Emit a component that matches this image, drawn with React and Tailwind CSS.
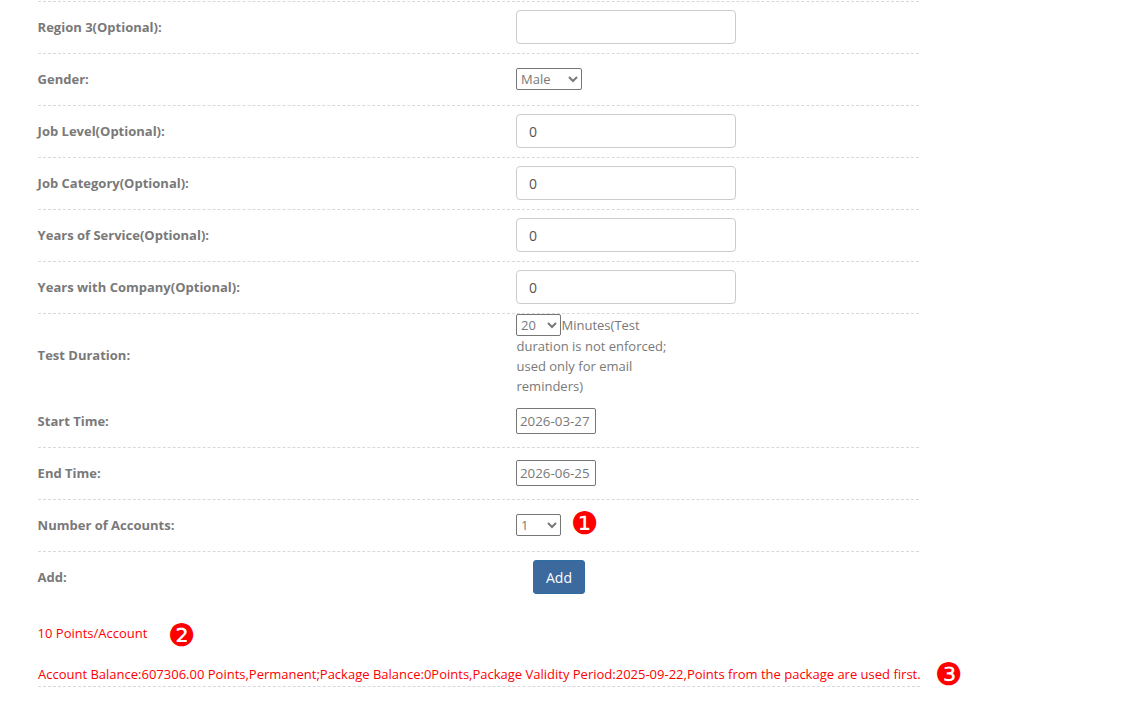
const font = "font-['Open_Sans',sans-serif]";

function Row({ label, children, noBorder, className = "h-[52px]", labelClass = "" }) {
  return (
    <div className={`flex items-center ${className} ${noBorder ? "" : "border-b border-dashed border-[#d9d9d9]"}`}>
      <div className={`w-[478px] shrink-0 -translate-x-[0.4px] text-[13px] font-bold text-[#797979] ${labelClass}`}>{label}</div>
      <div className="flex items-center pb-px">{children}</div>
    </div>
  );
}

function TextInput({ value }) {
  return (
    <input
      readOnly
      defaultValue={value}
      className="w-[220px] h-[34px] rounded border border-[#cccccc] bg-white px-3 text-[14px] text-[#555555] outline-none"
    />
  );
}

function Select({ options, className }) {
  return (
    <select className={`h-[22px] rounded-[2px] border border-[#767676] bg-white text-[13px] text-[#797979] ${className}`}>
      {options.map((o) => (
        <option key={o}>{o}</option>
      ))}
    </select>
  );
}

function DateBox({ value }) {
  return (
    <input
      readOnly
      defaultValue={value}
      className="w-[80px] h-[26px] rounded-[2px] border border-[#767676] bg-white px-[3px] text-[13.33px] text-[#797979] outline-none"
    />
  );
}

function Mark({ children, className = "" }) {
  return (
    <span className={`font-['DejaVu_Sans',sans-serif] text-[31px] leading-none text-[#ff0000] ${className}`}>
      {children}
    </span>
  );
}

export default function App() {
  return (
    <div className={`${font} h-[703px] w-[1126px] overflow-hidden bg-white pl-[38px] pt-px`}>
      <div className="w-[881px]">
        <div className="border-b border-dashed border-[#d9d9d9]" />
        <Row label="Region 3(Optional):"><TextInput value="" /></Row>
        <Row label="Gender:"><Select options={["Male", "Female"]} className="w-[66px]" /></Row>
        <Row label="Job Level(Optional):"><TextInput value="0" /></Row>
        <Row label="Job Category(Optional):"><TextInput value="0" /></Row>
        <Row label="Years of Service(Optional):"><TextInput value="0" /></Row>
        <Row label="Years with Company(Optional):"><TextInput value="0" /></Row>
        <Row label="Test Duration:" noBorder className="h-[82px]" labelClass="pt-[2px]">
          <div className="w-[165px] pl-[0.5px] pt-[1px] text-[13px] leading-[20.25px] text-[#797979]">
            <Select options={["20", "30", "60"]} className="-ml-[0.5px] mr-[0.5px] w-[45px]" />
            Minutes(Test duration is not enforced; used only for email reminders)
          </div>
        </Row>
        <Row label="Start Time:"><DateBox value="2026-03-27" /></Row>
        <Row label="End Time:"><DateBox value="2026-06-25" /></Row>
        <Row label="Number of Accounts:">
          <Select options={["1", "2", "3"]} className="w-[45px]" />
          <Mark className="ml-[10px] -mt-[4px]">❶</Mark>
        </Row>
        <Row label="Add:" noBorder>
          <button className="mb-px ml-[17px] h-[34px] w-[52px] rounded-[3px] border border-[#2e6da4] bg-[#3c699e] text-[14px] text-white">
            Add
          </button>
        </Row>
      </div>
      <div className="mt-[13px] flex h-[34px] items-center text-[13px] text-[#ff0000]">
        <span className="-translate-x-[0.4px]">10 Points/Account</span>
        <Mark className="ml-[20px] mt-[2px]">❷</Mark>
      </div>
      <div className="mt-[2px] flex h-[34px] items-center text-[13px] text-[#ff0000]">
        <span className="flex h-[34px] w-[882px] items-end whitespace-nowrap border-b border-dashed border-[#d9d9d9] pb-[2px]">
          Account Balance:607306.00 Points,Permanent;Package Balance:0Points,Package Validity Period:2025-09-22,Points from the package are used first.
        </span>
        <Mark className="ml-[15px] mt-[8px]">❸</Mark>
      </div>
    </div>
  );
}
